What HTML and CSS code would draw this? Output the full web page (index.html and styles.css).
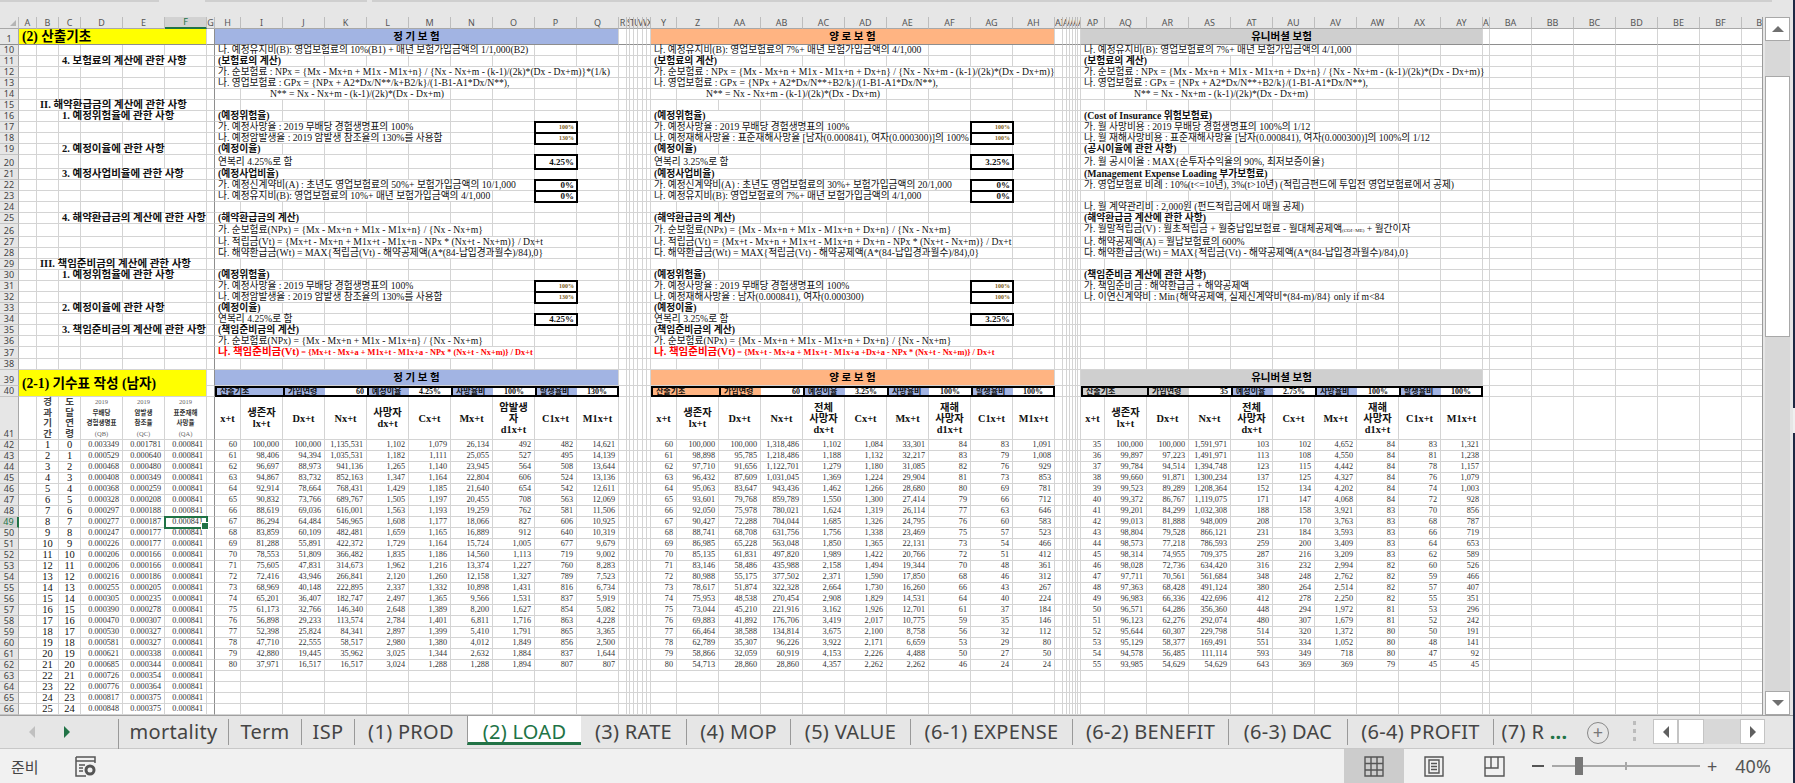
FILE: index.html
```html
<!DOCTYPE html>
<html lang="ko">
<head>
  <meta charset="UTF-8" />
  <title>(2) LOAD - Excel</title>
  <link rel="stylesheet" href="styles.css">
</head>
<body>
  <div class="edgePatch"></div>
  <div class="app">
    <div class="topStrip">
      <span class="stripA"></span><span class="stripB"></span><span class="stripC"></span>
    </div>

    <div class="main">
      <div class="sheet"><table id="grid"></table></div>
      <div class="vscroll">
        <div class="sbBtn"><span class="triUp"></span></div>
        <div class="sbTrackTop"></div>
        <div class="sbThumb"></div>
        <div class="sbTrackBottom"></div>
        <div class="sbBtn"><span class="triDown"></span></div>
      </div>
    </div>

    <div class="tabBar">
      <div class="tabNav">
        <span class="triLeft off"></span>
        <span class="triRight on"></span>
      </div>
      <div class="tabs" id="tabs"></div>
      <div class="addSheet">+</div>
      <div class="grip"><i></i><i></i><i></i></div>
      <div class="hscroll">
        <div class="hBtn"><span class="triLeft"></span></div>
        <div class="hThumb"></div>
        <div class="hTrack"></div>
        <div class="hBtn"><span class="triRight"></span></div>
      </div>
    </div>

    <div class="statusBar">
      <span class="ready">준비</span>
      <svg class="macroIcon" width="22" height="21" viewBox="0 0 22 21" fill="none" stroke="#555" stroke-width="1.5">
        <path d="M1 1h19v6M1 1v19h10M1 5h19M4 9h6M4 12h4M4 15h4" />
        <circle cx="15" cy="14" r="5.5" fill="#555" stroke="none" />
        <circle cx="15" cy="14" r="2.5" fill="#f1f1f1" stroke="none" />
      </svg>
      <div class="views">
        <div class="viewBtn current">
          <svg width="20" height="21" viewBox="0 0 20 21" fill="none" stroke="#555" stroke-width="1.4">
            <path d="M1 1h18v19H1zM7 1v19M13 1v19M1 7.5h18M1 14h18" />
          </svg>
        </div>
        <div class="viewBtn">
          <svg width="20" height="21" viewBox="0 0 20 21" fill="none" stroke="#555" stroke-width="1.4">
            <path d="M1 1h18v19H1zM5 4h10v13H5zM7 7.5h6M7 10.5h6M7 13.5h6" />
          </svg>
        </div>
        <div class="viewBtn">
          <svg width="21" height="21" viewBox="0 0 21 21" fill="none" stroke="#555" stroke-width="1.4">
            <path d="M1 1h19v19H1zM1 12h13V1M7 1v11" />
          </svg>
        </div>
      </div>
      <div class="zoomBox">
        <span class="zoomMinus"></span>
        <div class="slider"><span class="sliderTick"></span><span class="sliderThumb"></span></div>
        <span class="zoomPlus">+</span>
        <span class="zoomValue">40%</span>
      </div>
    </div>
  </div>

  <script src="script.js"></script>
</body>
</html>
```

FILE: styles.css
```css
* { box-sizing: border-box; margin: 0; padding: 0; }
html, body { height: 100%; overflow: hidden; }
body {
  background-color: #1f2a44;
  font-family: 'Liberation Serif', 'Noto Sans CJK KR', serif;
  color: #111;
}
.app {
  width: 1793px;
  height: 783px;
  display: flex;
  flex-direction: column;
  background-color: #e6e6e6;
}
.edgePatch {
  position: absolute;
  left: 1793px;
  top: 408px;
  width: 2px;
  height: 25px;
  background-color: #f0f0f0;
}

/* top of the window */
.topStrip { height: 17px; display: flex; gap: 5px; flex: none; }
.topStrip span { height: 2px; background-color: #cfcfcf; }
.stripA { width: 159px; }
.stripB { width: 162px; margin-left: 41px; }
.stripC { width: 1400px; }

.main { display: flex; height: 698px; flex: none; }
.sheet {
  width: 1763px;
  overflow: hidden;
  border-right: 1px solid #9a9a9a;
  background-color: #fff;
}

/* grid */
#grid { border-collapse: separate; border-spacing: 0; table-layout: fixed; }
#grid th, #grid td {
  height: 11px;
  line-height: 10px;
  white-space: nowrap;
  border-right: 1px solid #d4d4d4;
  border-bottom: 1px solid #d4d4d4;
  vertical-align: middle;
}
#grid td { font-size: 9.7px; padding-left: 3px; font-weight: normal; }
#grid tr.colHead th {
  font-family: 'Noto Sans', sans-serif;
  font-size: 9px;
  font-weight: normal;
  color: #555;
  background-color: #e6e6e6;
  border-right: 1px solid #bdbdbd;
  border-bottom: 1px solid #a8a8a8;
  overflow: hidden;
  padding: 0;
  text-align: center;
}
#grid tr.colHead th.sel {
  background-color: #d2d2d2;
  color: #217346;
  border-bottom: 2px solid #217346;
}
#grid th.corner { position: relative; }
.cornerTri {
  position: absolute;
  right: 2px;
  bottom: 2px;
  border-left: 6px solid transparent;
  border-bottom: 6px solid #b4b4b4;
}
#grid th.rowHead {
  font-family: 'Noto Sans', sans-serif;
  font-size: 9px;
  font-weight: normal;
  color: #444;
  background-color: #e6e6e6;
  border-right: 1px solid #a8a8a8;
  border-bottom: 1px solid #c4c4c4;
  vertical-align: bottom;
  padding: 0;
  line-height: 10px;
}
#grid th.rowHead.sel {
  background-color: #d2d2d2;
  color: #217346;
  border-right: 2px solid #217346;
}
#grid tr.h13 td, #grid tr.h13 th { height: 14px; }
#grid tr.h16 td, #grid tr.h16 th { height: 16px; }
#grid tr.h43 td, #grid tr.h43 th { height: 43px; }
#grid tr.freeze td, #grid tr.freeze th { border-bottom: 1px solid #8e8e8e; }
#grid td.freezeCol { border-right: 1px solid #8e8e8e; }

#grid td.b { font-weight: bold; font-size: 9.8px; }
#grid td.big { font-weight: bold; font-size: 10.5px; }
#grid td.indent { padding-left: 29px; }
#grid td.title {
  background-color: #ff0;
  font-size: 13.6px;
  font-weight: bold;
  color: #000;
  line-height: 15px;
}
#grid td.sec {
  font-size: 10.5px;
  font-weight: bold;
  text-align: center;
  padding: 0;
  color: #000;
}
.fillBlue { background-color: #a2b4e3; }
.fillOrange { background-color: #ffb482; }
.fillGray { background-color: #cfcfcf; }

#grid td.band {
  border-top: 2px solid #000;
  border-bottom: 2px solid #000;
  border-right: 0;
  line-height: 7px;
  font-size: 8px;
  font-weight: bold;
  color: #111;
}
#grid td.band.first { border-left: 2px solid #000; }
#grid td.band.last { border-right: 2px solid #000; }
#grid td.band.val { text-align: right; padding: 0 3px 0 0; }
#grid td.band.pct { text-align: center; padding: 0; }

#grid td.box {
  outline: 2px solid #000;
  outline-offset: -1px;
  text-align: right;
  font-weight: bold;
  font-size: 6px;
  color: #7a5a20;
  padding: 0 2px 0 0;
}
#grid td.box.dark { font-size: 9px; color: #111; }

#grid td.red { color: #f00; font-weight: bold; font-size: 8.3px; }
.redHead { font-size: 10.5px; }
.tiny { font-size: 5px; }

#grid td.head {
  font-size: 10.3px;
  font-weight: bold;
  text-align: center;
  padding: 0;
  white-space: normal;
  line-height: 11px;
  color: #111;
}
#grid td.upright {
  font-size: 9.5px;
  text-align: center;
  padding: 0;
  color: #444;
  font-weight: bold;
  line-height: 10.5px;
  white-space: normal;
}
#grid td.rateHead {
  font-size: 6.5px;
  text-align: center;
  padding: 0;
  color: #666;
  line-height: 10.5px;
  white-space: normal;
}
.rateHead b { color: #333; }
#grid td.n { font-size: 8.2px; text-align: right; padding: 0 3px 0 0; color: #333; }
#grid td.count { font-size: 10.5px; text-align: center; padding: 0; color: #111; line-height: 10px; }
#grid td.picked {
  position: relative;
  outline: 2px solid #217346;
  outline-offset: -1px;
}
#grid td.picked::after {
  content: '';
  position: absolute;
  right: -3px;
  bottom: -3px;
  width: 6px;
  height: 6px;
  background-color: #217346;
  border: 1px solid #fff;
}

/* vertical scrollbar */
.vscroll {
  width: 30px;
  padding: 0 3px 0 2px;
  display: flex;
  flex-direction: column;
  flex: none;
}
.sbBtn {
  height: 24px;
  background-color: #fff;
  border: 1px solid #a8a8a8;
  display: flex;
  align-items: center;
  justify-content: center;
  flex: none;
}
.sbTrackTop { height: 35px; background-color: #d8d8d8; flex: none; }
.sbThumb { height: 261px; background-color: #fff; border: 1px solid #a8a8a8; flex: none; }
.sbTrackBottom { flex: 1; background-color: #d8d8d8; }
.triUp { border-left: 6px solid transparent; border-right: 6px solid transparent; border-bottom: 6px solid #707070; }
.triDown { border-left: 6px solid transparent; border-right: 6px solid transparent; border-top: 6px solid #707070; }
.triLeft { border-top: 6px solid transparent; border-bottom: 6px solid transparent; border-right: 6px solid #606060; }
.triRight { border-top: 6px solid transparent; border-bottom: 6px solid transparent; border-left: 6px solid #606060; }
.triLeft.off { border-right-color: #c0c0c0; }
.triRight.on { border-left-color: #217346; }

/* sheet tabs */
.tabBar {
  height: 34px;
  flex: none;
  display: flex;
  align-items: flex-start;
  border-top: 1px solid #a0a0a0;
  border-bottom: 1px solid #c8c8c8;
  background-color: #e6e6e6;
}
.tabNav {
  width: 118px;
  height: 32px;
  display: flex;
  align-items: center;
  gap: 29px;
  padding-left: 29px;
  flex: none;
}
.tabs { display: flex; height: 30px; flex: none; border-left: 1px solid #999; margin-top: 3px; }
.tab {
  height: 26px;
  border-right: 1px solid #999;
  font-family: 'Noto Sans', sans-serif;
  font-size: 20px;
  letter-spacing: 0.3px;
  line-height: 25px;
  text-align: center;
  color: #444;
  white-space: nowrap;
}
.tab.noLine { border-right: 0; }
.tab.active {
  height: 29px;
  margin-top: -3px;
  padding-top: 3px;
  background-color: #fff;
  color: #217346;
  border-right: 0;
  border-left: 1px solid #999;
  border-bottom: 3px solid #217346;
}
.more { color: #217346; }
.addSheet {
  width: 22px;
  height: 22px;
  margin: 6px 0 0 12px;
  border: 1px solid #888;
  border-radius: 50%;
  font-family: 'Noto Sans', sans-serif;
  font-size: 18px;
  line-height: 19px;
  text-align: center;
  color: #777;
  flex: none;
}
.grip { width: 4px; margin: 5px 0 0 24px; display: flex; flex-direction: column; gap: 4px; flex: none; }
.grip i { display: block; height: 4px; width: 3px; background-color: #bcbcbc; }
.hscroll { display: flex; margin: 3px 0 0 16px; height: 25px; flex: none; }
.hBtn {
  width: 25px;
  background-color: #fff;
  border: 1px solid #c4c4c4;
  display: flex;
  align-items: center;
  justify-content: center;
}
.hThumb { width: 26px; background-color: #fff; border: 1px solid #c4c4c4; }
.hTrack { width: 36px; background-color: #d8d8d8; }

/* status bar */
.statusBar {
  height: 34px;
  flex: 1;
  display: flex;
  align-items: center;
  background-color: #f1f1f1;
  font-family: 'Noto Sans', 'Noto Sans CJK KR', sans-serif;
  color: #444;
}
.ready { font-family: 'Noto Sans CJK KR', sans-serif; font-size: 15px; margin-left: 11px; width: 64px; }
.macroIcon { flex: none; }
.views { display: flex; margin-left: 1247px; height: 100%; }
.viewBtn { width: 60px; display: flex; align-items: center; justify-content: center; }
.viewBtn.current { background-color: #ccc; }
.zoomBox { display: flex; align-items: center; margin-left: 8px; }
.zoomMinus { width: 12px; height: 2px; background-color: #555; }
.slider { position: relative; width: 148px; height: 2px; margin-left: 8px; background-color: #a8a8a8; }
.sliderThumb { position: absolute; left: 23px; top: -8px; width: 8px; height: 18px; background-color: #777; }
.sliderTick { position: absolute; left: 73px; top: -3px; width: 2px; height: 8px; background-color: #a8a8a8; }
.zoomPlus { font-size: 18px; margin-left: 7px; line-height: 18px; color: #555; }
.zoomValue { font-size: 18px; margin-left: 18px; color: #555; }
```

FILE: script.js
```js
const colWidths = [19, 18, 22, 22, 42, 42, 42, 8, 26];
for (let i = 0; i < 9; i++) colWidths.push(42);
colWidths.push(8, 3, 4, 4, 5, 4, 4, 26);
for (let i = 0; i < 9; i++) colWidths.push(42);
colWidths.push(8, 4, 3, 3, 3, 2, 3, 24);
for (let i = 0; i < 9; i++) colWidths.push(42);
colWidths.push(7);
for (let i = 0; i < 7; i++) colWidths.push(42);

function colName(i) {
  const abc = 'ABCDEFGHIJKLMNOPQRSTUVWXYZ';
  return i < 26 ? abc[i] : abc[Math.floor(i / 26) - 1] + abc[i % 26];
}

const colIndex = {};
for (let i = 0; i < colWidths.length - 1; i++) colIndex[colName(i)] = i;

// texts that come back in more than one block
const rule17 = '가. 예정사망율 : 2019 무배당 경험생명표의 100%';
const rule18 = '나. 예정암발생율 : 2019 암발생 참조율의 130%를 사용함';
const tail7 = '나. 예정유지비(B): 영업보험료의 7%+ 매년 보험가입금액의 4/1,000';
const wt = '다. 해약환급금(Wt) = MAX{적립금(Vt) - 해약공제액(A*(84-납입경과월수)/84),0}';
const np = '가. 순보험료(NPx) = {Mx - Mx+n + M1x - M1x+n} / {Nx - Nx+m}';
const npD = '가. 순보험료(NPx) = {Mx - Mx+n + M1x - M1x+n + Dx+n} / {Nx - Nx+m}';
const npK = '가. 순보험료 : NPx = {Mx - Mx+n + M1x - M1x+n + Dx+n} / {Nx - Nx+m - (k-1)/(2k)*(Dx - Dx+m)}';
const gp = '나. 영업보험료 : GPx = {NPx + A2*Dx/N**+B2/k}/(1-B1-A1*Dx/N**),';
const nss = 'N** = Nx - Nx+m - (k-1)/(2k)*(Dx - Dx+m)';

// [column, span, text, class]
const rows = {
  1: [['A', 6, '(2) 산출기초', 'title'], ['H', 10, '정 기 보 험', 'sec fillBlue'], ['Y', 10, '양 로 보 험', 'sec fillOrange'], ['AP', 10, '유니버셜 보험', 'sec fillGray']],
  10: [['H', 8, '나. 예정유지비(B): 영업보험료의 10%(B1) + 매년 보험가입금액의 1/1,000(B2)'], ['Y', 7, tail7], ['AP', 7, tail7]],
  11: [['C', 4, '4. 보험료의 계산에 관한 사항', 'big'], ['H', 3, '(보험료의 계산)', 'b'], ['Y', 3, '(보험료의 계산)', 'b'], ['AP', 3, '(보험료의 계산)', 'b']],
  12: [['H', 10, '가. 순보험료 : NPx = {Mx - Mx+n + M1x - M1x+n} / {Nx - Nx+m - (k-1)/(2k)*(Dx - Dx+m)}*(1/k)'], ['Y', 10, npK], ['AP', 10, npK]],
  13: [['H', 8, '나. 영업보험료 : GPx = {NPx + A2*Dx/N**/k+B2/k}/(1-B1-A1*Dx/N**),'], ['Y', 8, gp], ['AP', 8, gp]],
  14: [['I', 5, nss, 'indent'], ['Z', 5, nss, 'indent'], ['AQ', 5, nss, 'indent']],
  15: [['B', 5, 'II. 해약환급금의 계산에 관한 사항', 'big']],
  16: [['C', 4, '1. 예정위험율에 관한 사항', 'big'], ['H', 2, '(예정위험율)', 'b'], ['Y', 3, '(예정위험율)', 'b'], ['AP', 4, '(Cost of Insurance 위험보험료)', 'b']],
  17: [['H', 6, rule17], ['P', 1, '100%', 'box'], ['Y', 6, rule17], ['AG', 1, '100%', 'box'], ['AP', 6, '가. 월 사망비용 : 2019 무배당 경험생명표의 100%의 1/12']],
  18: [['H', 6, rule18], ['P', 1, '130%', 'box'], ['Y', 8, '나. 예정재해사망율 : 표준재해사망율 [남자(0.000841), 여자(0.000300)]의 100%'], ['AG', 1, '100%', 'box'], ['AP', 9, '나. 월 재해사망비용 : 표준재해사망율 [남자(0.000841), 여자(0.000300)]의 100%의 1/12']],
  19: [['C', 3, '2. 예정이율에 관한 사항', 'big'], ['H', 2, '(예정이율)', 'b'], ['Y', 2, '(예정이율)', 'b'], ['AP', 3, '(공시이율에 관한 사항)', 'b']],
  20: [['H', 3, '연복리 4.25%로 함'], ['P', 1, '4.25%', 'box dark'], ['Y', 3, '연복리 3.25%로 함'], ['AG', 1, '3.25%', 'box dark'], ['AP', 7, '가. 월 공시이율 : MAX{순투자수익율의 90%, 최저보증이율}']],
  21: [['C', 4, '3. 예정사업비율에 관한 사항', 'big'], ['H', 3, '(예정사업비율)', 'b'], ['Y', 3, '(예정사업비율)', 'b'], ['AP', 5, '(Management Expense Loading 부가보험료)', 'b']],
  22: [['H', 8, '가. 예정신계약비(A) : 초년도 영업보험료의 50%+ 보험가입금액의 10/1,000'], ['P', 1, '0%', 'box dark'], ['Y', 8, '가. 예정신계약비(A) : 초년도 영업보험료의 30%+ 보험가입금액의 20/1,000'], ['AG', 1, '0%', 'box dark'], ['AP', 10, '가. 영업보험료 비례 : 10%(t&lt;=10년), 3%(t&gt;10년) (적립금펀드에 투입전 영업보험료에서 공제)']],
  23: [['H', 7, '나. 예정유지비(B): 영업보험료의 10%+ 매년 보험가입금액의 4/1,000'], ['P', 1, '0%', 'box dark'], ['Y', 7, tail7], ['AG', 1, '0%', 'box dark']],
  24: [['AP', 6, '나. 월 계약관리비 : 2,000원 (펀드적립금에서 매월 공제)']],
  25: [['C', 4, '4. 해약환급금의 계산에 관한 사항', 'big'], ['H', 3, '(해약환급금의 계산)', 'b'], ['Y', 3, '(해약환급금의 계산)', 'b'], ['AP', 4, '(해약환급금 계산에 관한 사항)', 'b']],
  26: [['H', 7, np], ['Y', 8, npD], ['AP', 9, '가. 월말적립금(V) : 월초적립금 + 월중납입보험료 - 월대체공제액<span class="tiny">(COI+ME)</span> + 월간이자']],
  27: [['H', 8, '나. 적립금(Vt) = {Mx+t - Mx+n + M1x+t - M1x+n - NPx * (Nx+t - Nx+m)} / Dx+t'], ['Y', 9, '나. 적립금(Vt) = {Mx+t - Mx+n + M1x+t - M1x+n + Dx+n - NPx * (Nx+t - Nx+m)} / Dx+t'], ['AP', 5, '나. 해약공제액(A) = 월납보험료의 600%']],
  28: [['H', 8, wt], ['Y', 9, wt], ['AP', 9, wt]],
  29: [['B', 5, 'III. 책임준비금의 계산에 관한 사항', 'big']],
  30: [['C', 4, '1. 예정위험율에 관한 사항', 'big'], ['H', 2, '(예정위험율)', 'b'], ['Y', 2, '(예정위험율)', 'b'], ['AP', 4, '(책임준비금 계산에 관한 사항)', 'b']],
  31: [['H', 6, rule17], ['P', 1, '100%', 'box'], ['Y', 6, rule17], ['AG', 1, '100%', 'box'], ['AP', 5, '가. 책임준비금 : 해약환급금 + 해약공제액']],
  32: [['H', 6, rule18], ['P', 1, '130%', 'box'], ['Y', 6, '나. 예정재해사망율 : 남자(0.000841), 여자(0.000300)'], ['AG', 1, '100%', 'box'], ['AP', 8, '나. 이연신계약비 : Min{해약공제액, 실제신계약비*(84-m)/84} only if m&lt;84']],
  33: [['C', 3, '2. 예정이율에 관한 사항', 'big'], ['H', 2, '(예정이율)', 'b'], ['Y', 2, '(예정이율)', 'b']],
  34: [['H', 3, '연복리 4.25%로 함'], ['P', 1, '4.25%', 'box dark'], ['Y', 3, '연복리 3.25%로 함'], ['AG', 1, '3.25%', 'box dark']],
  35: [['C', 4, '3. 책임준비금의 계산에 관한 사항', 'big'], ['H', 3, '(책임준비금의 계산)', 'b'], ['Y', 3, '(책임준비금의 계산)', 'b']],
  36: [['H', 7, np], ['Y', 7, npD]],
  37: [['H', 8, '<span class="redHead">나. 책임준비금(Vt)</span> = {Mx+t - Mx+a + M1x+t - M1x+a - NPx * (Nx+t - Nx+m)} / Dx+t', 'red'], ['Y', 9, '<span class="redHead">나. 책임준비금(Vt)</span> = {Mx+t - Mx+a + M1x+t - M1x+a +Dx+a - NPx * (Nx+t - Nx+m)} / Dx+t', 'red']],
  38: [],
  39: [['A', 6, '(2-1) 기수표 작성 (남자)', 'title', 2], ['H', 10, '정 기 보 험', 'sec fillBlue'], ['Y', 10, '양 로 보 험', 'sec fillOrange'], ['AP', 10, '유니버셜 보험', 'sec fillGray']],
  40: [],
  41: [
    ['B', 1, '경<br>과<br>기<br>간', 'upright'],
    ['C', 1, '도<br>달<br>연<br>령', 'upright'],
    ['D', 1, '2019<br><b>무배당<br>경험생명표</b><br>(QB)', 'rateHead'],
    ['E', 1, '2019<br><b>암발생<br>참조율</b><br>(QC)', 'rateHead'],
    ['F', 1, '2019<br><b>표준재해<br>사망율</b><br>(QA)', 'rateHead']
  ]
};

function addBand(startCol, fill, age, rate, death, onset) {
  const s = colIndex[startCol];
  const c = (n) => colName(s + n);
  rows[40].push(
    [c(0), 2, '산출기초', 'band first ' + fill],
    [c(2), 1, '가입연령', 'band first ' + fill],
    [c(3), 1, age, 'band val'],
    [c(4), 1, '예정이율', 'band first fillBlue'],
    [c(5), 1, rate, 'band pct'],
    [c(6), 1, '사망율비', 'band first fillBlue'],
    [c(7), 1, death, 'band pct'],
    [c(8), 1, '발생율비', 'band first fillBlue'],
    [c(9), 1, onset, 'band pct last']
  );
}
addBand('H', 'fillBlue', '60', '4.25%', '100%', '130%');
addBand('Y', 'fillOrange', '60', '3.25%', '100%', '100%');
addBand('AP', 'fillGray', '35', '2.75%', '100%', '100%');

function addHead(startCol, labels) {
  labels.forEach((label, n) => {
    rows[41].push([colName(colIndex[startCol] + n), 1, label, 'head']);
  });
}
addHead('H', ['x+t', '생존자<br>lx+t', 'Dx+t', 'Nx+t', '사망자<br>dx+t', 'Cx+t', 'Mx+t', '암발생<br>자<br>d1x+t', 'C1x+t', 'M1x+t']);
addHead('Y', ['x+t', '생존자<br>lx+t', 'Dx+t', 'Nx+t', '전체<br>사망자<br>dx+t', 'Cx+t', 'Mx+t', '재해<br>사망자<br>d1x+t', 'C1x+t', 'M1x+t']);
addHead('AP', ['x+t', '생존자<br>lx+t', 'Dx+t', 'Nx+t', '전체<br>사망자<br>dx+t', 'Cx+t', 'Mx+t', '재해<br>사망자<br>d1x+t', 'C1x+t', 'M1x+t']);

const rates = [
  '0.003349 0.001781', '0.000529 0.000640', '0.000468 0.000480', '0.000408 0.000349', '0.000368 0.000259',
  '0.000328 0.000208', '0.000297 0.000188', '0.000277 0.000187', '0.000247 0.000177', '0.000226 0.000177',
  '0.000206 0.000166', '0.000206 0.000166', '0.000216 0.000186', '0.000255 0.000205', '0.000305 0.000235',
  '0.000390 0.000278', '0.000470 0.000307', '0.000530 0.000327', '0.000581 0.000327', '0.000621 0.000338',
  '0.000685 0.000344', '0.000726 0.000354', '0.000776 0.000364', '0.000817 0.000375', '0.000848 0.000375',
  '0.000868 0.000366'
];

const termTable = `60 100,000 100,000 1,135,531 1,102 1,079 26,134 492 482 14,621
61 98,406 94,394 1,035,531 1,182 1,111 25,055 527 495 14,139
62 96,697 88,973 941,136 1,265 1,140 23,945 564 508 13,644
63 94,867 83,732 852,163 1,347 1,164 22,804 606 524 13,136
64 92,914 78,664 768,431 1,429 1,185 21,640 654 542 12,611
65 90,832 73,766 689,767 1,505 1,197 20,455 708 563 12,069
66 88,619 69,036 616,001 1,563 1,193 19,259 762 581 11,506
67 86,294 64,484 546,965 1,608 1,177 18,066 827 606 10,925
68 83,859 60,109 482,481 1,659 1,165 16,889 912 640 10,319
69 81,288 55,891 422,372 1,729 1,164 15,724 1,005 677 9,679
70 78,553 51,809 366,482 1,835 1,186 14,560 1,113 719 9,002
71 75,605 47,831 314,673 1,962 1,216 13,374 1,227 760 8,283
72 72,416 43,946 266,841 2,120 1,260 12,158 1,327 789 7,523
73 68,969 40,148 222,895 2,337 1,332 10,898 1,431 816 6,734
74 65,201 36,407 182,747 2,497 1,365 9,566 1,531 837 5,919
75 61,173 32,766 146,340 2,648 1,389 8,200 1,627 854 5,082
76 56,898 29,233 113,574 2,784 1,401 6,811 1,716 863 4,228
77 52,398 25,824 84,341 2,897 1,399 5,410 1,791 865 3,365
78 47,710 22,555 58,517 2,980 1,380 4,012 1,849 856 2,500
79 42,880 19,445 35,962 3,025 1,344 2,632 1,884 837 1,644
80 37,971 16,517 16,517 3,024 1,288 1,288 1,894 807 807`;

const endowTable = `60 100,000 100,000 1,318,486 1,102 1,084 33,301 84 83 1,091
61 98,898 95,785 1,218,486 1,188 1,132 32,217 83 79 1,008
62 97,710 91,656 1,122,701 1,279 1,180 31,085 82 76 929
63 96,432 87,609 1,031,045 1,369 1,224 29,904 81 73 853
64 95,063 83,647 943,436 1,462 1,266 28,680 80 69 781
65 93,601 79,768 859,789 1,550 1,300 27,414 79 66 712
66 92,050 75,978 780,021 1,624 1,319 26,114 77 63 646
67 90,427 72,288 704,044 1,685 1,326 24,795 76 60 583
68 88,741 68,708 631,756 1,756 1,338 23,469 75 57 523
69 86,985 65,228 563,048 1,850 1,365 22,131 73 54 466
70 85,135 61,831 497,820 1,989 1,422 20,766 72 51 412
71 83,146 58,486 435,988 2,158 1,494 19,344 70 48 361
72 80,988 55,175 377,502 2,371 1,590 17,850 68 46 312
73 78,617 51,874 322,328 2,664 1,730 16,260 66 43 267
74 75,953 48,538 270,454 2,908 1,829 14,531 64 40 224
75 73,044 45,210 221,916 3,162 1,926 12,701 61 37 184
76 69,883 41,892 176,706 3,419 2,017 10,775 59 35 146
77 66,464 38,588 134,814 3,675 2,100 8,758 56 32 112
78 62,789 35,307 96,226 3,922 2,171 6,659 53 29 80
79 58,866 32,059 60,919 4,153 2,226 4,488 50 27 50
80 54,713 28,860 28,860 4,357 2,262 2,262 46 24 24`;

const uniTable = `35 100,000 100,000 1,591,971 103 102 4,652 84 83 1,321
36 99,897 97,223 1,491,971 113 108 4,550 84 81 1,238
37 99,784 94,514 1,394,748 123 115 4,442 84 78 1,157
38 99,660 91,871 1,300,234 137 125 4,327 84 76 1,079
39 99,523 89,289 1,208,364 152 134 4,202 84 74 1,003
40 99,372 86,767 1,119,075 171 147 4,068 84 72 928
41 99,201 84,299 1,032,308 188 158 3,921 83 70 856
42 99,013 81,888 948,009 208 170 3,763 83 68 787
43 98,804 79,528 866,121 231 184 3,593 83 66 719
44 98,573 77,218 786,593 259 200 3,409 83 64 653
45 98,314 74,955 709,375 287 216 3,209 83 62 589
46 98,028 72,736 634,420 316 232 2,994 82 60 526
47 97,711 70,561 561,684 348 248 2,762 82 59 466
48 97,363 68,428 491,124 380 264 2,514 82 57 407
49 96,983 66,336 422,696 412 278 2,250 82 55 351
50 96,571 64,286 356,360 448 294 1,972 81 53 296
51 96,123 62,276 292,074 480 307 1,679 81 52 242
52 95,644 60,307 229,798 514 320 1,372 80 50 191
53 95,129 58,377 169,491 551 334 1,052 80 48 141
54 94,578 56,485 111,114 593 349 718 80 47 92
55 93,985 54,629 54,629 643 369 369 79 45 45`;

rates.forEach((line, i) => {
  const r = 42 + i;
  const [qb, qc] = line.split(' ');
  rows[r] = [
    ['B', 1, String(i + 1), 'count'],
    ['C', 1, String(i), 'count'],
    ['D', 1, qb, 'n'],
    ['E', 1, qc, 'n'],
    ['F', 1, '0.000841', r === 49 ? 'n picked' : 'n']
  ];
});

function addNumbers(startCol, table) {
  table.split('\n').forEach((line, i) => {
    line.split(' ').forEach((value, n) => {
      rows[42 + i].push([colName(colIndex[startCol] + n), 1, value, 'n']);
    });
  });
}
addNumbers('H', termTable);
addNumbers('Y', endowTable);
addNumbers('AP', uniTable);

const heights = { 1: 'h16 freeze', 20: 'h13', 39: 'h16', 41: 'h43' };
const lastCol = colWidths.length - 1;
const covered = {};
let html = '<colgroup>' + colWidths.map((w) => `<col style="width:${w}px">`).join('') + '</colgroup>';

html += '<tr class="colHead"><th class="corner"><span class="cornerTri"></span></th>';
for (let i = 0; i < lastCol; i++) {
  html += `<th${colName(i) === 'F' ? ' class="sel"' : ''}>${colName(i)}</th>`;
}
html += '</tr>';

Object.keys(rows).map(Number).sort((a, b) => a - b).forEach((r) => {
  const byCol = {};
  rows[r].forEach((cell) => { byCol[colIndex[cell[0]]] = cell; });

  html += `<tr class="${heights[r] || ''}"><th class="rowHead${r === 49 ? ' sel' : ''}">${r}</th>`;
  let i = 0;
  while (i < lastCol) {
    if (covered[r + ':' + i]) { i += covered[r + ':' + i]; continue; }
    const cell = byCol[i];
    const lastBefore = i === 6 ? ' freezeCol' : '';
    if (!cell) {
      html += `<td class="${lastBefore}"></td>`;
      i++;
      continue;
    }
    const [, span, text, cls, rowspan] = cell;
    if (rowspan) covered[(r + 1) + ':' + i] = span;
    html += `<td colspan="${span}"${rowspan ? ` rowspan="${rowspan}"` : ''} class="${cls || ''}">${text}</td>`;
    i += span;
  }
  html += '</tr>';
});

const grid = document.getElementById('grid');
grid.style.width = colWidths.reduce((a, b) => a + b, 0) + 'px';
grid.innerHTML = html;

// sheet tabs, width of each one as in the workbook window
const tabs = [
  ['mortality', 110], ['Term', 73], ['ISP', 53], ['(1) PROD', 112], ['(2) LOAD', 114, 'active'],
  ['(3) RATE', 106], ['(4) MOP', 104], ['(5) VALUE', 120], ['(6-1) EXPENSE', 162], ['(6-2) BENEFIT', 156],
  ['(6-3) DAC', 119], ['(6-4) PROFIT', 146], ['(7) R <b class="more">...</b>', 81, 'noLine']
];
document.getElementById('tabs').innerHTML = tabs.map(([name, width, extra]) => {
  const cls = extra || (name === '(1) PROD' ? 'noLine' : '');
  return `<div class="tab ${cls}" style="width:${width}px">${name}</div>`;
}).join('');
```
